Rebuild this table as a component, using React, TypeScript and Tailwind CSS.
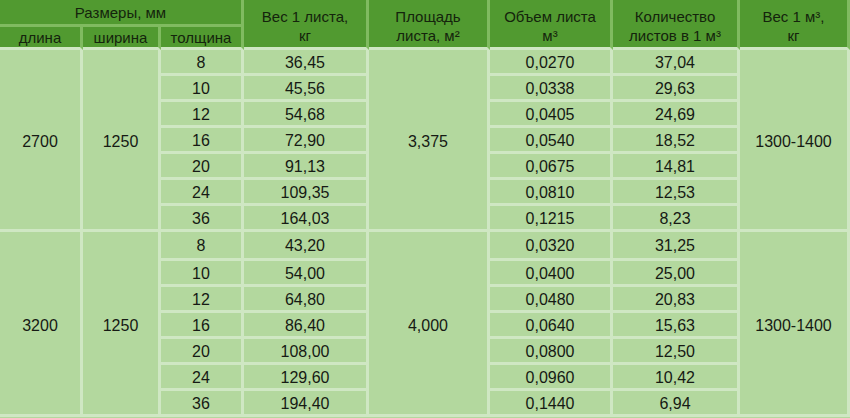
import React from "react";

type Row = { t: string; w: string; v: string; n: string };

const block1: Row[] = [
  { t: "8", w: "36,45", v: "0,0270", n: "37,04" },
  { t: "10", w: "45,56", v: "0,0338", n: "29,63" },
  { t: "12", w: "54,68", v: "0,0405", n: "24,69" },
  { t: "16", w: "72,90", v: "0,0540", n: "18,52" },
  { t: "20", w: "91,13", v: "0,0675", n: "14,81" },
  { t: "24", w: "109,35", v: "0,0810", n: "12,53" },
  { t: "36", w: "164,03", v: "0,1215", n: "8,23" },
];
const block2: Row[] = [
  { t: "8", w: "43,20", v: "0,0320", n: "31,25" },
  { t: "10", w: "54,00", v: "0,0400", n: "25,00" },
  { t: "12", w: "64,80", v: "0,0480", n: "20,83" },
  { t: "16", w: "86,40", v: "0,0640", n: "15,63" },
  { t: "20", w: "108,00", v: "0,0800", n: "12,50" },
  { t: "24", w: "129,60", v: "0,0960", n: "10,42" },
  { t: "36", w: "194,40", v: "0,1440", n: "6,94" },
];

const hd =
  "bg-[#519a30] text-[#14240c] flex items-center justify-center text-center text-[15px] leading-[19px] border-r-[3px] border-[#80bb60]";
const hdTall = hd + " h-[50px] border-b-[3px] border-b-[#cfe7c3] pt-[5px]";
const bd =
  "bg-[#b3d89e] text-[#161a14] flex items-center justify-center text-[16px] pt-[2px] border-r-[3px] border-b-[3px] border-[#cfe7c3]";

function Rows({ rows, first, cols }: { rows: Row[]; first: string; cols: "tw" | "vn" }) {
  return (
    <div className="flex flex-col">
      {rows.map((r, i) => (
        <div key={i} className={"flex " + (i === 0 ? first : "h-[26px]")}>
          {cols === "tw" ? (
            <>
              <div className={bd + " w-[83px]"}>{r.t}</div>
              <div className={bd + " w-[125px]"}>{r.w}</div>
            </>
          ) : (
            <>
              <div className={bd + " w-[123px]"}>{r.v}</div>
              <div className={bd + " w-[127px]"}>{r.n}</div>
            </>
          )}
        </div>
      ))}
    </div>
  );
}

function Block({ rows, len, area, first }: { rows: Row[]; len: string; area: string; first: string }) {
  return (
    <div className="flex">
      <div className={bd + " w-[83px] pt-[5px]"}>{len}</div>
      <div className={bd + " w-[78px] pt-[5px]"}>1250</div>
      <Rows rows={rows} first={first} cols="tw" />
      <div className={bd + " w-[121px] pt-[5px]"}>{area}</div>
      <Rows rows={rows} first={first} cols="vn" />
      <div className={bd + " w-[110px] border-r-0 pt-[5px]"}>1300-1400</div>
    </div>
  );
}

export default function App() {
  return (
    <div
      className="w-[850px] h-[418px] overflow-hidden bg-[#b3d89e]"
      style={{ fontFamily: '"Liberation Sans", Arial, sans-serif' }}
    >
      <div className="flex">
        <div className="flex flex-col w-[244px]">
          <div className={hd + " h-[27px] border-b-[3px] pt-[1px]"}>Размеры, мм</div>
          <div className="flex">
            <div className={hd + " w-[83px] h-[23px] border-b-[3px] border-b-[#cfe7c3] pt-[1px]"}>длина</div>
            <div className={hd + " w-[78px] h-[23px] border-b-[3px] border-b-[#cfe7c3] pt-[1px]"}>ширина</div>
            <div className={hd + " w-[83px] h-[23px] border-b-[3px] border-b-[#cfe7c3] pt-[1px]"}>толщина</div>
          </div>
        </div>
        <div className={hdTall + " w-[125px]"}>
          Вес 1 листа,
          <br />
          кг
        </div>
        <div className={hdTall + " w-[121px]"}>
          Площадь
          <br />
          листа, м²
        </div>
        <div className={hdTall + " w-[123px]"}>
          Объем листа
          <br />
          м³
        </div>
        <div className={hdTall + " w-[127px]"}>
          Количество
          <br />
          листов в 1 м³
        </div>
        <div className={hdTall + " w-[110px] border-r-0"}>
          Вес 1 м³,
          <br />
          кг
        </div>
      </div>
      <Block rows={block1} len="2700" area="3,375" first="h-[26px]" />
      <Block rows={block2} len="3200" area="4,000" first="h-[29px]" />
    </div>
  );
}
